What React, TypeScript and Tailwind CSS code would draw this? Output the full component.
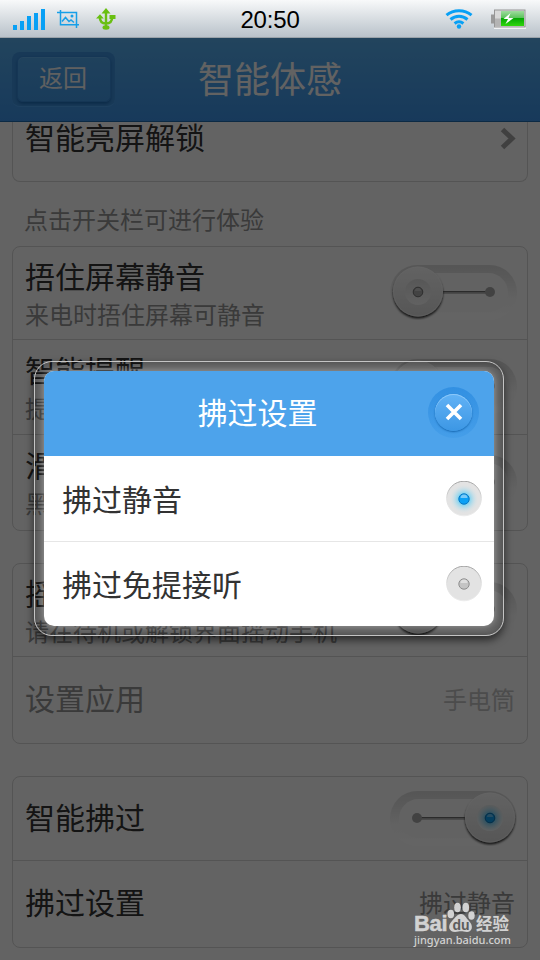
import type { ReactNode } from "react";

type RowProps = {
  title: string;
  desc?: string;
  className?: string;
  disabled?: boolean;
  children?: ReactNode;
};

export default function App() {
  return (
    <div className="relative flex h-[960px] w-[540px] flex-col overflow-hidden bg-[#f7f7f7] font-['Liberation_Sans','Noto_Sans_CJK_SC',sans-serif] text-[#323232]">
      <StatusBar />

      <header className="grid h-[84px] shrink-0 grid-cols-[1fr_auto_1fr] items-center border-b border-[#2069ab] bg-linear-to-b from-[#56abe9] to-[#3b90e3] px-3">
        <div className="flex h-[55px] w-[103px] items-center justify-center rounded-lg border-b border-[#4ea2ee] bg-[#3d8fd9]">
          <button
            type="button"
            className="h-[46px] w-[94px] rounded-md border border-[#3687d4] bg-linear-to-b from-[#4fa3e7] to-[#4096e2] pr-px text-[24px] leading-none text-[#f0f0f0] shadow-[0_2px_3px_#1f6cb5,inset_0_1px_0_#5eacec]"
          >
            返回
          </button>
        </div>
        <h1 className="pt-0.5 text-[36px] leading-none text-[#f5f5f5]">智能体感</h1>
      </header>

      <main className="flex flex-col px-3">
        <Card className="h-[60px] rounded-t-none border-t-0">
          <div className="flex h-[59px] items-start justify-between pl-3 pr-[11px]">
            <span className="pt-[2px] text-[30px] leading-[30px]">智能亮屏解锁</span>
            <svg className="mt-[5px]" width="16" height="23" viewBox="0 0 16 23" fill="none">
              <path d="M2.500 2.500 12 11.500 2.500 20.500" stroke="#a0a0a0" strokeWidth="5" />
            </svg>
          </div>
        </Card>

        <p className="flex h-16 items-center pl-3 pt-[13px] text-[24px] leading-none text-[#919191]">
          点击开关栏可进行体验
        </p>

        <Card className="h-[285px]">
          <Row title="捂住屏幕静音" desc="来电时捂住屏幕可静音" className="h-[93px] border-b">
            <Toggle />
          </Row>
          <Row title="智能提醒" desc="提" className="h-[95px] border-b">
            <Toggle />
          </Row>
          <Row title="滑" desc="黑" className="h-[95px]">
            <Toggle />
          </Row>
        </Card>

        <Card className="mt-8 h-[181px]">
          <Row title="摇" desc="请在待机或解锁界面摇动手机" className="h-[93px] border-b">
            <Toggle />
          </Row>
          <Row title="设置应用" className="h-[86px]" disabled>
            <span className="pt-px text-[24px] text-[#bebebe]">手电筒</span>
          </Row>
        </Card>

        <Card className="mt-8 h-[172px]">
          <Row title="智能拂过" className="h-[84px] border-b">
            <Toggle on />
          </Row>
          <Row title="拂过设置" className="h-[86px]">
            <span className="text-[24px] text-[#919191]">拂过静音</span>
          </Row>
        </Card>
      </main>

      <div className="absolute inset-x-0 bottom-0 top-[38px] bg-black/60" />
      <SettingsDialog />
      <Watermark />
    </div>
  );
}

function StatusBar() {
  return (
    <div className="grid h-[38px] shrink-0 grid-cols-3 items-center border-b border-[#9aa2a9] bg-linear-to-b from-[#f8f9fa] to-[#b9c2ca]">
      <div className="flex items-center pl-[13px]">
        <svg width="33" height="22" viewBox="0 0 33 22" fill="#08a0f5">
          <path d="M0 17h4v5H0zM7 13h4v9H7zM14 8h4v14h-4zM21 5h4v17h-4zM28 1h4v21h-4z" />
        </svg>
        <svg className="ml-[11px]" width="23" height="18" viewBox="0 0 23 18" fill="none" stroke="#169fe8" strokeWidth="1.500">
          <path d="M0 2.500h19.500V18M3.500 0v14.800H22" />
          <path d="m5 11.500 3.500-4 3.500 4 2-1.500 3 2.500" />
          <circle cx="15" cy="6" r="1.500" fill="#169fe8" stroke="none" />
        </svg>
        <svg className="ml-4" width="20" height="22" viewBox="0 0 20 22" fill="none" stroke="#69bf12" strokeWidth="2.400">
          <path d="M10 5v14M3.800 9c0 4 2 6.500 6.200 6.500s6.200-2.500 6.200-6.500" />
          <path d="M10 0 14.500 5.500h-9zM4 6.200 7.800 10.500H0zM13.500 7H19.500v4h-6z" fill="#69bf12" stroke="none" />
          <ellipse cx="10" cy="19.500" rx="3.500" ry="2.200" fill="#69bf12" stroke="none" />
        </svg>
      </div>
      <span className="pt-0.5 text-center text-[24px] leading-none tracking-[-0.2px] text-black">20:50</span>
      <div className="flex items-center justify-end pr-[14px]">
        <svg width="28" height="20" viewBox="0 0 28 20" fill="none" stroke="#08a0f5" strokeWidth="3">
          <path d="M1.500 6.200C8.500.2 19.500.2 26.500 6.200M5.500 10.500c5-4.300 12-4.300 17 0M9.600 14.500c2.700-2.200 6.100-2.200 8.800 0" />
          <circle cx="14" cy="17.500" r="2.200" fill="#08a0f5" stroke="none" />
        </svg>
        <svg className="ml-[18px]" width="35" height="20" viewBox="0 0 35 20">
          <defs>
            <linearGradient id="charge" x1="0" y1="0" x2="0" y2="1">
              <stop offset="0" stopColor="#9fdc9f" />
              <stop offset="0.480" stopColor="#58c158" />
              <stop offset="0.500" stopColor="#04a804" />
              <stop offset="1" stopColor="#2fd60c" />
            </linearGradient>
          </defs>
          <path d="M3 19h32" stroke="#fff" strokeWidth="1.500" />
          <path d="M0 5.500h3v9H0z" fill="#9a9a9a" />
          <rect x="3.500" y="1" width="30.500" height="17" fill="#d8d8d8" stroke="#969696" />
          <path d="M4 9.500h6V17H4z" fill="#b4b4b4" />
          <rect x="10" y="2" width="23" height="15" fill="url(#charge)" />
          <path d="m19.500 4-7 6h4.500l-2.500 5 8-6h-5z" fill="#fff" />
        </svg>
      </div>
    </div>
  );
}

function Card({ className, children }: { className: string; children: ReactNode }) {
  return <section className={`rounded-lg border border-[#d2d2d2] ${className}`}>{children}</section>;
}

function Row({ title, desc, className, disabled, children }: RowProps) {
  return (
    <div className={`flex items-center justify-between border-[#d2d2d2] px-3 ${className}`}>
      <div className={`flex flex-col whitespace-nowrap ${desc ? "pt-[7px]" : ""} ${disabled ? "text-[#919191]" : ""}`}>
        <span className="text-[30px] leading-[38px]">{title}</span>
        {desc && <span className="text-[24px] leading-[38px] text-[#919191]">{desc}</span>}
      </div>
      {children}
    </div>
  );
}

function Toggle({ on = false }: { on?: boolean }) {
  const knob = on ? 100 : 28;
  const dot = on ? 27 : 100;
  return (
    <svg className="-mr-[2px] mb-0.5 shrink-0" width="127" height="56" viewBox="0 0 127 56">
      <defs>
        <linearGradient id="track" x1="0" y1="0" x2="0" y2="1">
          <stop offset="0" stopColor="#d6d6d6" />
          <stop offset="0.250" stopColor="#e0e0e0" />
          <stop offset="0.600" stopColor="#f4f4f4" />
          <stop offset="1" stopColor="#fbfbfb" />
        </linearGradient>
        <linearGradient id="knob" x1="0" y1="0" x2="0" y2="1">
          <stop offset="0" stopColor="#f6f6f6" />
          <stop offset="1" stopColor="#d8d8d8" />
        </linearGradient>
        <linearGradient id="dish" x1="0" y1="0" x2="0" y2="1">
          <stop offset="0" stopColor="#d9d9d9" />
          <stop offset="1" stopColor="#f4f4f4" />
        </linearGradient>
        <radialGradient id="knobGlow">
          <stop offset="0.300" stopColor="#5fc5f2" />
          <stop offset="1" stopColor="#e6f0f2" stopOpacity="0.500" />
        </radialGradient>
        <filter id="knobShadow" x="-20%" y="-20%" width="140%" height="140%">
          <feDropShadow dx="0" dy="2" stdDeviation="1.200" floodColor="#000" floodOpacity="0.800" />
        </filter>
      </defs>
      <rect x="0" y="1" width="127" height="55" rx="27.500" fill="url(#track)" />
      <rect x="9" y="9" width="109" height="39" rx="19.500" fill="#f5f5f5" />
      <path d="M28 28.500h72" stroke="#a8a8a8" strokeWidth="2.500" />
      <path d="M28 27.500h72" stroke="#6c6c6c" />
      <circle cx={dot} cy="28" r="5" fill="#a5a5a5" />
      <circle cx={knob} cy="27.500" r="25" fill="url(#knob)" filter="url(#knobShadow)" />
      <circle cx={knob} cy="27.500" r="24.500" fill="none" stroke="#fff" strokeOpacity="0.400" />
      <circle cx={knob} cy="28" r="13" fill="url(#dish)" />
      {on && <circle cx={knob} cy="28" r="13" fill="url(#knobGlow)" />}
      <circle cx={knob} cy="28" r="4.800" fill={on ? "#0a9cec" : "#a8a8a8"} stroke={on ? "#0b6fae" : "#707070"} />
      <path d={`M${knob - 3} 27a3 3 0 0 1 6 0z`} fill="#fff" fillOpacity="0.350" />
    </svg>
  );
}

function SettingsDialog() {
  return (
    <div
      role="dialog"
      className="absolute left-[34px] top-[361px] w-[470px] rounded-[18px] border border-[#c4c4c4] p-[9px] shadow-[0_4px_9px_rgba(0,0,0,0.6),inset_0_0_5px_rgba(0,0,0,0.25)]"
    >
      <div className="overflow-hidden rounded-[10px] bg-white shadow-[0_0_6px_rgba(255,255,255,0.4)]">
        <div className="grid h-[85px] grid-cols-[1fr_auto_1fr] items-center bg-[#4da3eb] pr-[15px]">
          <h2 className="col-start-2 -ml-2 text-[30px] leading-none text-white">拂过设置</h2>
          <button
            type="button"
            aria-label="close"
            className="mt-[-3px] flex size-[51px] items-center justify-center justify-self-end rounded-full bg-linear-to-b from-[#3290e2] to-[#459ee9]"
          >
            <span className="flex size-[37px] items-center justify-center rounded-full bg-linear-to-b from-[#61b2f6] to-[#3c97e4] shadow-[0_1px_2px_#1466b0,inset_0_1px_0_#8cc8fa]">
              <svg width="18" height="18" viewBox="0 0 18 18" stroke="#fff" strokeWidth="3.600">
                <path d="m2 2 14 14M16 2 2 16" />
              </svg>
            </span>
          </button>
        </div>
        <Option label="拂过静音" className="h-[86px] border-b border-[#e6e6e6]" checked />
        <Option label="拂过免提接听" className="h-[84px]" />
      </div>
    </div>
  );
}

function Option({ label, className, checked = false }: { label: string; className: string; checked?: boolean }) {
  return (
    <div className={`flex items-center justify-between pl-[18px] pr-3 ${className}`}>
      <span className="pt-1 text-[30px] leading-none">{label}</span>
      <svg width="36" height="36" viewBox="0 0 36 36">
        <defs>
          <radialGradient id="glow">
            <stop offset="0.250" stopColor="#57cdf6" />
            <stop offset="1" stopColor="#e3e3e3" stopOpacity="0" />
          </radialGradient>
          <linearGradient id="rim" x1="0" y1="0" x2="0" y2="1">
            <stop offset="0" stopColor="#a0a0a0" />
            <stop offset="0.500" stopColor="#dedede" />
            <stop offset="1" stopColor="#ececec" />
          </linearGradient>
        </defs>
        <circle cx="18" cy="17.500" r="17.300" fill="#e3e3e3" stroke="url(#rim)" />
        {checked && <circle cx="18" cy="18" r="15" fill="url(#glow)" />}
        <circle cx="18" cy="18" r="5.200" fill={checked ? "#0aa0f5" : "#c4c4c4"} stroke={checked ? "#0878c4" : "#8e8e8e"} />
        <path d="M14.500 17a3.500 3.500 0 0 1 7 0z" fill="#fff" fillOpacity="0.450" />
      </svg>
    </div>
  );
}

function Watermark() {
  return (
    <div className="absolute left-[414px] top-[902px] flex w-[98px] flex-col text-[#d2d2d2]">
      <div className="flex h-[31px] items-end">
        <span className="w-[33px] text-[22px] font-bold leading-[18px] tracking-[-0.3px] [-webkit-text-stroke:0.5px_#d2d2d2]">Bai</span>
        <svg width="28" height="31" viewBox="0 0 28 31" fill="#d2d2d2">
          <ellipse cx="3.800" cy="12" rx="3.300" ry="4.300" />
          <ellipse cx="10.500" cy="5.500" rx="3.300" ry="4.700" />
          <ellipse cx="18.800" cy="5.500" rx="3.300" ry="4.700" />
          <ellipse cx="24.500" cy="13.500" rx="3.200" ry="4.300" />
          <path d="M14 12c4 0 5 4 8 7 5 5 3 11-2 11-3 0-4-.7-6-.7S11 30 8 30c-6 0-8-6-3-11 3-3 5-7 9-7z" />
          <text x="14" y="27.500" textAnchor="middle" fontSize="14" fontWeight="bold" fill="#5c5c5c">
            du
          </text>
        </svg>
        <span className="ml-px text-[16.500px] font-bold leading-[18px]">经验</span>
      </div>
      <span className="font-['Noto_Sans',sans-serif] text-[11px] font-medium leading-[14px]">jingyan.baidu.com</span>
    </div>
  );
}
